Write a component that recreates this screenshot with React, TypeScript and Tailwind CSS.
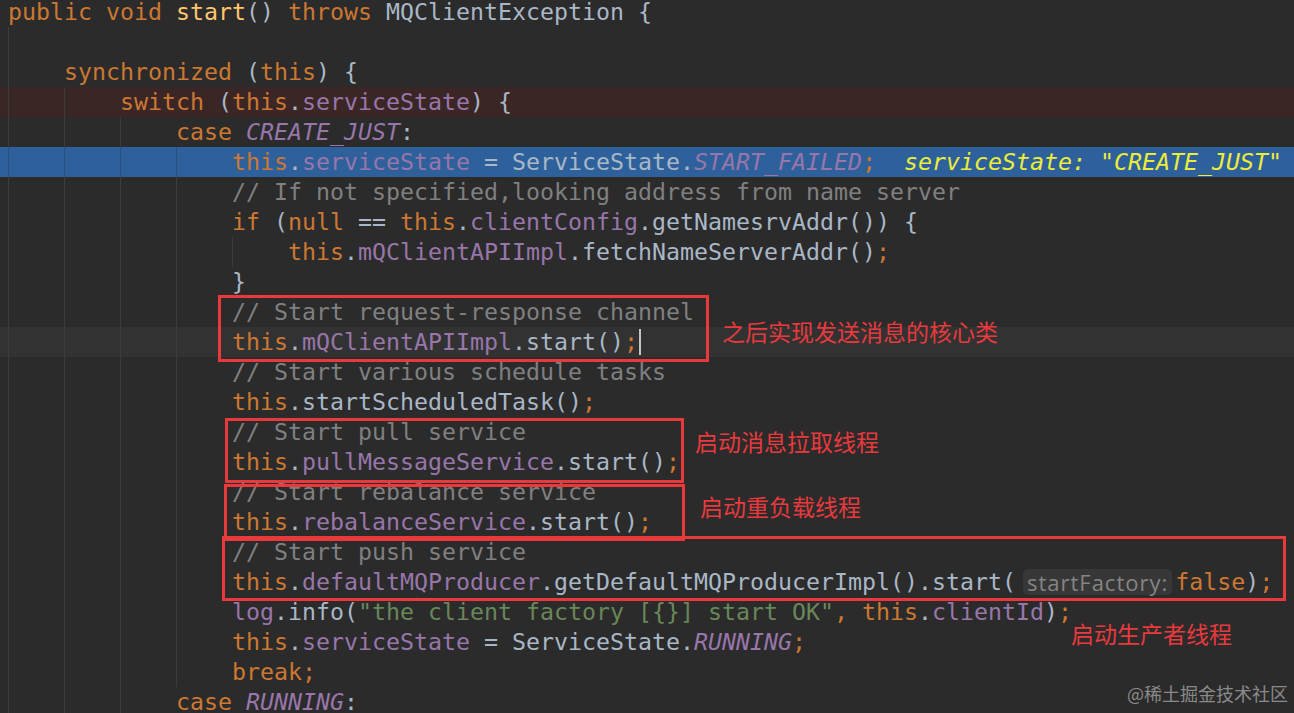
type Tok = [string, string];

const K = "text-[#cc7832]";
const D = "text-[#a9b7c6]";
const F = "text-[#9876aa]";
const C = "text-[#808080]";
const S = "text-[#6a8759]";
const M = "text-[#ffc66d]";
const I = "text-[#9876aa] italic";
const V = "text-[#ecec3a] italic";

type Line = {
  guides: number;
  toks: Tok[];
  row?: "bp" | "exec" | "cur";
  caret?: boolean;
  hint?: { before: Tok[]; after: Tok[] };
};

const lines: Line[] = [
  { guides: 0, toks: [["public void ", K], ["start", M], ["() ", D], ["throws ", K], ["MQClientException {", D]] },
  { guides: 1, toks: [] },
  { guides: 1, toks: [["synchronized ", K], ["(", D], ["this", K], [") {", D]] },
  { guides: 2, row: "bp", toks: [["switch ", K], ["(", D], ["this", K], [".", D], ["serviceState", F], [") {", D]] },
  { guides: 3, toks: [["case ", K], ["CREATE_JUST", I], [":", D]] },
  {
    guides: 4,
    row: "exec",
    toks: [
      ["this", K],
      [".", D],
      ["serviceState", F],
      [" = ServiceState.", D],
      ["START_FAILED", I],
      [";", K],
      ["  ", D],
      ['serviceState: "CREATE_JUST"', V],
    ],
  },
  { guides: 4, toks: [["// If not specified,looking address from name server", C]] },
  {
    guides: 4,
    toks: [
      ["if ", K],
      ["(", D],
      ["null ", K],
      ["== ", D],
      ["this", K],
      [".", D],
      ["clientConfig", F],
      [".getNamesrvAddr()) {", D],
    ],
  },
  { guides: 5, toks: [["this", K], [".", D], ["mQClientAPIImpl", F], [".fetchNameServerAddr()", D], [";", K]] },
  { guides: 4, toks: [["}", D]] },
  { guides: 4, toks: [["// Start request-response channel", C]] },
  { guides: 4, row: "cur", caret: true, toks: [["this", K], [".", D], ["mQClientAPIImpl", F], [".start()", D], [";", K]] },
  { guides: 4, toks: [["// Start various schedule tasks", C]] },
  { guides: 4, toks: [["this", K], [".startScheduledTask()", D], [";", K]] },
  { guides: 4, toks: [["// Start pull service", C]] },
  { guides: 4, toks: [["this", K], [".", D], ["pullMessageService", F], [".start()", D], [";", K]] },
  { guides: 4, toks: [["// Start rebalance service", C]] },
  { guides: 4, toks: [["this", K], [".", D], ["rebalanceService", F], [".start()", D], [";", K]] },
  { guides: 4, toks: [["// Start push service", C]] },
  {
    guides: 4,
    toks: [],
    hint: {
      before: [["this", K], [".", D], ["defaultMQProducer", F], [".getDefaultMQProducerImpl().start(", D]],
      after: [["false", K], [")", D], [";", K]],
    },
  },
  {
    guides: 4,
    toks: [
      ["log", F],
      [".info(", D],
      ['"the client factory [{}] start OK"', S],
      [", ", K],
      ["this", K],
      [".", D],
      ["clientId", F],
      [")", D],
      [";", K],
    ],
  },
  { guides: 4, toks: [["this", K], [".", D], ["serviceState", F], [" = ServiceState.", D], ["RUNNING", I], [";", K]] },
  { guides: 4, toks: [["break;", K]] },
  { guides: 3, toks: [["case ", K], ["RUNNING", I], [":", D]] },
];

function Toks({ toks }: { toks: Tok[] }) {
  return (
    <>
      {toks.map(([t, c], i) => (
        <span key={i} className={c}>
          {t}
        </span>
      ))}
    </>
  );
}

function CodeRow({ line }: { line: Line }) {
  const bg =
    line.row === "bp"
      ? "bg-[#3b2626]"
      : line.row === "exec"
        ? "bg-[#2e619b]"
        : line.row === "cur"
          ? "bg-[#323232]"
          : "";
  const guide = line.row === "exec" ? "border-[#25507f]" : "border-[#3c3c3c]";
  return (
    <div className={`flex h-[30px] items-center whitespace-pre pl-[8px] leading-[30px] ${bg}`}>
      {Array.from({ length: line.guides }).map((_, i) => (
        <span key={i} className={`h-[30px] w-[56px] shrink-0 border-l ${guide}`} />
      ))}
      <Toks toks={line.toks} />
      {line.hint && (
        <>
          <Toks toks={line.hint.before} />
          <span className="ml-[7px] mr-[3px] rounded-[5px] bg-[#373737] px-[4px] font-['Open_Sans',sans-serif] text-[22px] leading-[26px] tracking-[1px] text-[#858585] not-italic">
            startFactory:
          </span>
          <Toks toks={line.hint.after} />
        </>
      )}
      {line.caret && <span className="ml-[1px] h-[26px] w-[2px] bg-[#c4c4c4]" />}
    </div>
  );
}

export default function App() {
  return (
    <div className="relative h-[713px] w-[1294px] overflow-hidden bg-[#2b2b2b]">
      {/* editor lines */}
      <div className="-mt-[3px] flex flex-col font-['DejaVu_Sans_Mono',monospace] text-[23.25px]">
        {lines.map((line, i) => (
          <CodeRow key={i} line={line} />
        ))}
      </div>

      {/* red annotation boxes */}
      <div className="absolute left-[218px] top-[295px] h-[67px] w-[491px] border-[3px] border-[#e8393d]" />
      <div className="absolute left-[225px] top-[418px] h-[65px] w-[459px] border-[3px] border-[#e8393d]" />
      <div className="absolute left-[224px] top-[484px] h-[57px] w-[461px] border-[3px] border-[#e8393d]" />
      <div className="absolute left-[222px] top-[536px] h-[65px] w-[1064px] border-[3px] border-[#e8393d]" />

      {/* notes */}
      <div className="font-['Noto_Sans_CJK_SC',sans-serif] text-[23px] leading-[30px] text-[#e8393d]">
        <span className="absolute left-[722px] top-[316px]">之后实现发送消息的核心类</span>
        <span className="absolute left-[695px] top-[426px]">启动消息拉取线程</span>
        <span className="absolute left-[700px] top-[491px]">启动重负载线程</span>
        <span className="absolute left-[1071px] top-[618px]">启动生产者线程</span>
      </div>

      {/* watermark */}
      <span className="absolute left-[1127px] top-[681px] font-['Noto_Sans_CJK_SC',sans-serif] text-[18px] leading-[24px] text-[#8a8a8a]">
        @稀土掘金技术社区
      </span>
    </div>
  );
}
